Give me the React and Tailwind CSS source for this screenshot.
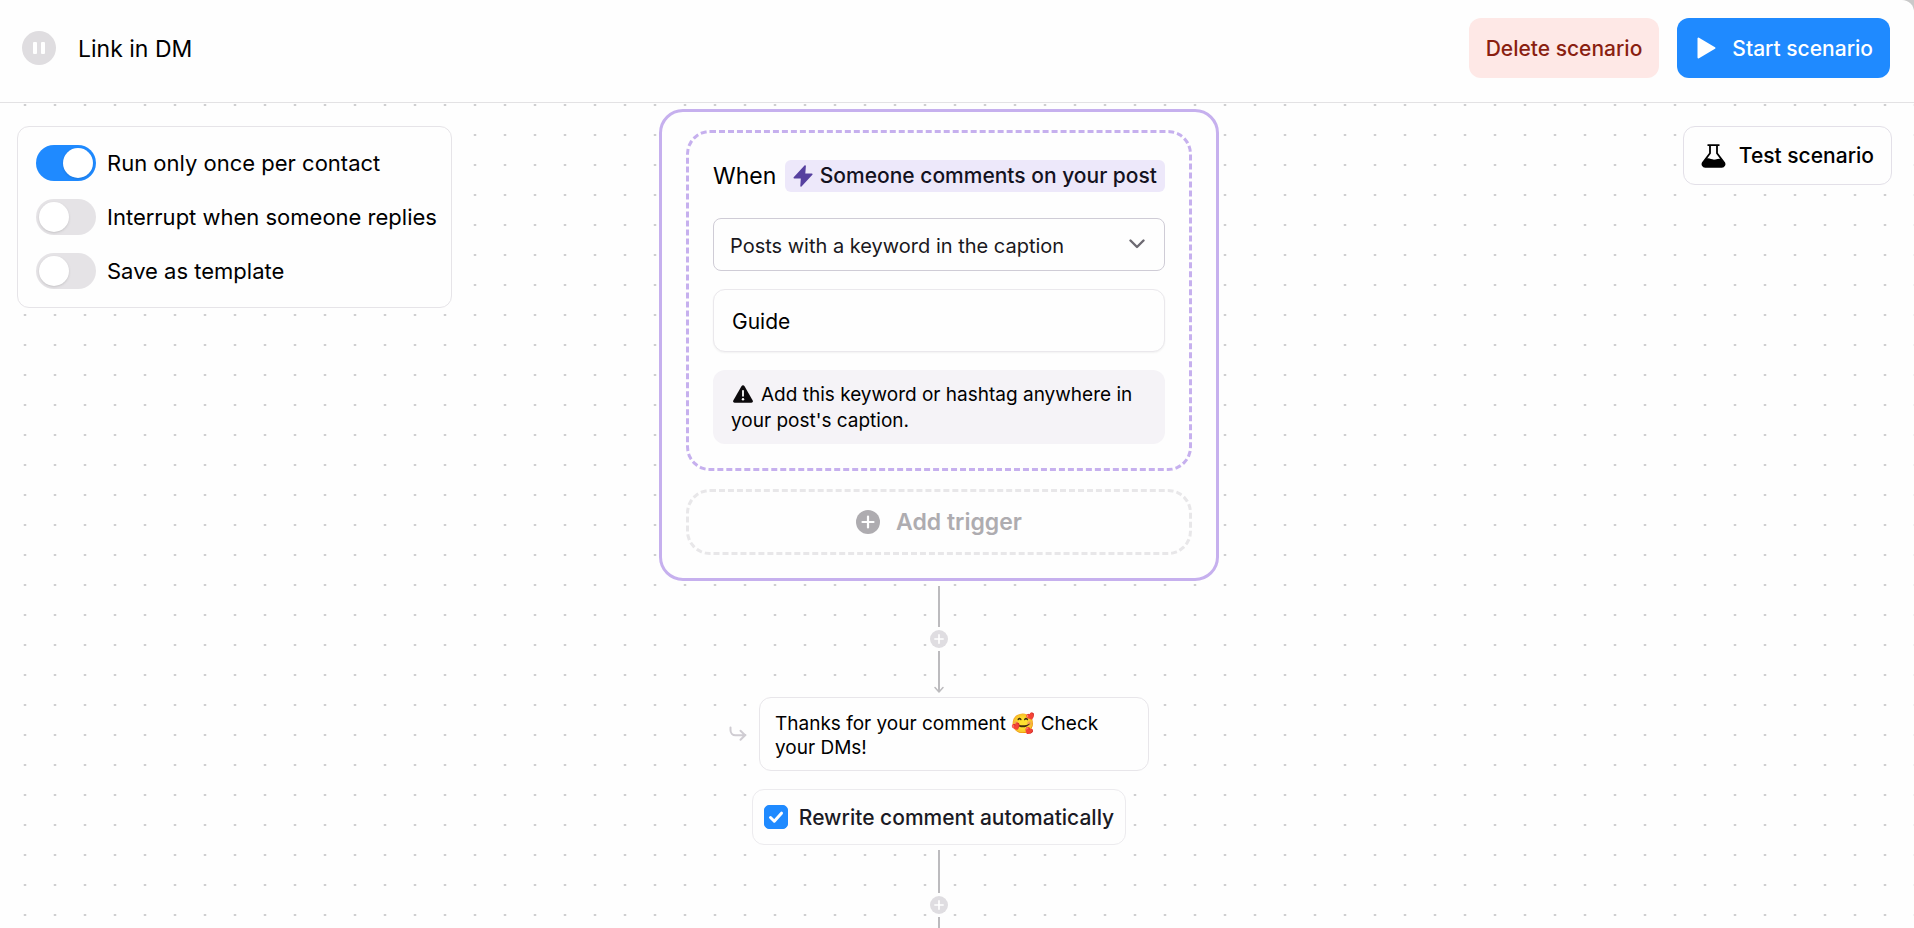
import { useState } from "react";

const TOGGLES = [
  { id: "once", label: "Run only once per contact", on: true },
  { id: "interrupt", label: "Interrupt when someone replies", on: false },
  { id: "template", label: "Save as template", on: false },
];

function PlusCircle({ className }) {
  return (
    <svg viewBox="0 0 24 24" className={className} aria-hidden="true">
      <circle cx="12" cy="12" r="12" fill="currentColor" />
      <path d="M12 6.5v11M6.5 12h11" stroke="#fff" strokeWidth="2.2" strokeLinecap="round" />
    </svg>
  );
}

function ScenarioHeader() {
  return (
    <header className="flex items-center justify-between rounded-tr-xl border-b border-[#e3e2e4] bg-[#fefefe] pt-[18px] pr-6 pb-6 pl-[22px]">
      <div className="flex items-center gap-[22px]">
        <svg viewBox="0 0 34 34" className="size-[34px]" aria-hidden="true">
          <circle cx="17" cy="17" r="17" fill="#dfdde0" />
          <rect x="11" y="11" width="4" height="12" rx="1" fill="#fff" />
          <rect x="19" y="11" width="4" height="12" rx="1" fill="#fff" />
        </svg>
        <h1 className="pt-0.5 text-[23px]">Link in DM</h1>
      </div>
      <div className="flex gap-[18px]">
        <button type="button" className="h-[60px] cursor-pointer rounded-xl bg-[#fee8e6] px-[17px] pt-0.5 text-[21px] font-medium text-[#8a1f11]">
          Delete scenario
        </button>
        <button type="button" className="flex h-[60px] cursor-pointer items-center gap-4 rounded-xl bg-[#1f8aff] pr-[17px] pl-5 text-[21px] font-medium text-white">
          <svg viewBox="0 0 19 22" className="h-[22px] w-[19px]" aria-hidden="true">
            <path d="M1.500 1.500v19l16-9.500z" fill="currentColor" stroke="currentColor" strokeWidth="2" strokeLinejoin="round" />
          </svg>
          <span className="pt-0.5">Start scenario</span>
        </button>
      </div>
    </header>
  );
}

function SettingsPanel() {
  const [values, setValues] = useState(TOGGLES);

  const toggle = (id) =>
    setValues(values.map((v) => (v.id === id ? { ...v, on: !v.on } : v)));

  return (
    <div className="flex flex-col gap-[18px] rounded-xl border border-[#e6e4e8] bg-[#fefefe] py-[18px] pr-[14px] pl-[18px]">
      {values.map((v) => (
        <label key={v.id} className="flex cursor-pointer items-center gap-[11px] text-[22px] leading-9 whitespace-nowrap">
          <input
            type="checkbox"
            role="switch"
            checked={v.on}
            onChange={() => toggle(v.id)}
            className="h-9 w-[60px] cursor-pointer appearance-none rounded-full bg-[#e5e3e6] p-[3px] before:block before:size-[30px] before:rounded-full before:bg-white before:shadow-sm checked:bg-[#1f8aff] checked:before:ml-6"
          />
          {v.label}
        </label>
      ))}
    </div>
  );
}

function TriggerCard() {
  const [keyword, setKeyword] = useState("Guide");

  return (
    <section className="flex w-[560px] flex-col gap-[18px] rounded-[24px] border-3 border-[#c6b0ee] bg-[#fefefe] px-6 pt-[18px] pb-[23px]">
      <div className="flex flex-col gap-[18px] rounded-[24px] border-3 border-dashed border-[#c6b0ee] px-6 pt-[27px] pb-6">
        <div className="mb-2 flex items-center justify-between whitespace-nowrap">
          <span className="text-[23px] leading-8">When</span>
          <span className="flex h-8 items-center gap-[7px] rounded-md bg-[#ede8fa] px-2 text-[21px] font-medium text-[#14121f]">
            <svg viewBox="0 0 20 22" className="h-[22px] w-5" aria-hidden="true">
              <path d="M11.500.500.700 12.200c-.5.500-.1 1.200.5 1.200h6.600L7.300 21c0 .8.700 1 1.200.5L19.400 9.800c.5-.6.100-1.300-.6-1.300h-6.500l.6-7.400c0-.9-.8-1.200-1.400-.600z" fill="#56409f" />
            </svg>
            Someone comments on your post
          </span>
        </div>
        <div className="relative">
          <select
            aria-label="Posts to watch"
            className="h-[53px] w-full cursor-pointer appearance-none rounded-lg border border-[#cfccd6] bg-[#fefefe] px-4 pt-0.5 text-xl text-[#1a1820] outline-none"
          >
            <option>Posts with a keyword in the caption</option>
            <option>Any post</option>
          </select>
          <svg viewBox="0 0 16 10" className="pointer-events-none absolute top-[21px] right-5 h-[10px] w-4" aria-hidden="true">
            <path d="M1.500 1.500 8 8l6.500-6.500" fill="none" stroke="#6d6a72" strokeWidth="2.400" strokeLinecap="round" strokeLinejoin="round" />
          </svg>
        </div>
        <input
          type="text"
          aria-label="Keyword"
          value={keyword}
          onChange={(e) => setKeyword(e.target.value)}
          className="h-[63px] w-full rounded-xl border border-[#eae8ec] bg-[#fefefe] px-[18px] pt-0.5 text-[21px] shadow-xs outline-none"
        />
        <p className="rounded-xl bg-[#f5f3f7] px-[18px] pt-3 pb-[10px] text-[19px] leading-[26px]">
          <svg viewBox="0 0 20 18" className="mr-2 ml-0.5 inline-block h-[18px] w-5 align-[-2px]" aria-hidden="true">
            <path d="M8.600.900c.6-1 2.200-1 2.800 0l8.300 14.600c.6 1.100-.1 2.300-1.300 2.300H1.600c-1.200 0-1.900-1.200-1.300-2.300z" fill="#0c0a0d" />
            <path d="M10 5.800v5" stroke="#fff" strokeWidth="1.800" strokeLinecap="round" />
            <circle cx="10" cy="14.200" r="1.200" fill="#fff" />
          </svg>
          Add this keyword or hashtag anywhere in your post's caption.
        </p>
      </div>
      <button
        type="button"
        className="flex h-[66px] cursor-pointer items-center justify-center gap-4 rounded-[24px] border-3 border-dashed border-[#e8e7e9] text-[23px] font-semibold text-[#aeacb0]"
      >
        <PlusCircle className="size-6" />
        Add trigger
      </button>
    </section>
  );
}

function AddStep() {
  return (
    <button type="button" aria-label="Add step" className="my-[3px] cursor-pointer text-[#dfdde1]">
      <PlusCircle className="size-[18px]" />
    </button>
  );
}

function ReplyStep() {
  const [rewrite, setRewrite] = useState(true);

  return (
    <>
      <div className="mt-1 flex w-[420px] items-center gap-3">
        <svg viewBox="0 0 18 16" className="h-4 w-[18px] shrink-0" aria-hidden="true">
          <path d="M1.500 1.500v2.500c0 3 2 5.300 5 5.300H16M11.500 4.800l4.600 4.500-4.600 4.500" fill="none" stroke="#cfccd2" strokeWidth="2" strokeLinecap="round" strokeLinejoin="round" />
        </svg>
        <p className="flex-1 rounded-xl border border-[#e8e6ea] bg-[#fefefe] px-[15px] pt-[14px] pb-[10px] text-[19px] leading-6">
          Thanks for your comment 🥰 Check your DMs!
        </p>
      </div>
      <label className="mt-[18px] flex h-14 cursor-pointer items-center gap-[11px] rounded-xl border border-[#ecebee] bg-[#fefefe] px-[11px] text-[21px] font-medium whitespace-nowrap text-[#1b1a24]">
        <span className="relative size-6">
          <input
            type="checkbox"
            checked={rewrite}
            onChange={(e) => setRewrite(e.target.checked)}
            className="block size-6 cursor-pointer appearance-none rounded-[5px] border border-[#cfccd6] checked:border-[#1f8aff] checked:bg-[#1f8aff]"
          />
          {rewrite && (
            <svg viewBox="0 0 24 24" className="pointer-events-none absolute inset-0" aria-hidden="true">
              <path d="m6.500 12.500 3.800 3.700 7.200-8" fill="none" stroke="#fff" strokeWidth="3" strokeLinecap="round" strokeLinejoin="round" />
            </svg>
          )}
        </span>
        <span className="pt-0.5">Rewrite comment automatically</span>
      </label>
    </>
  );
}

export default function App() {
  return (
    <div className="flex min-h-screen flex-col bg-[#c9c9c9] font-[Inter,sans-serif] text-black">
      <ScenarioHeader />
      <main className="grid flex-1 grid-cols-[1fr_auto_1fr] bg-[#fefefe] bg-[radial-gradient(ellipse_2px_1px_at_25px_2px,#bcbcbe_40%,transparent)] bg-size-[30px_30px] pt-[6px] pr-[22px] pl-[17px]">
        <div className="flex items-start pt-[17px]">
          <SettingsPanel />
        </div>

        {/* scenario flow */}
        <div className="mr-[31px] flex flex-col items-center">
          <TriggerCard />
          <div className="mt-[5px] h-[41px] w-0.5 bg-[#bcbbbe]" />
          <AddStep />
          <svg viewBox="0 0 10 42" className="h-[42px] w-[10px]" fill="none" stroke="#bcbbbe" aria-hidden="true">
            <path d="M5 0v41" strokeWidth="2" />
            <path d="m1 36.500 4 4.500 4-4.500" strokeWidth="1.500" strokeLinecap="round" strokeLinejoin="round" />
          </svg>
          <ReplyStep />
          <div className="mt-[5px] h-[43px] w-0.5 bg-[#bcbbbe]" />
          <AddStep />
          <div className="min-h-[8px] w-0.5 flex-1 bg-[#bcbbbe]" />
        </div>

        <div className="flex items-start justify-end pt-[17px]">
          <button type="button" className="flex h-[59px] cursor-pointer items-center gap-[13px] rounded-xl border border-[#e3e0e8] bg-[#fefefe] px-[17px] text-[21px] font-medium whitespace-nowrap">
            <svg viewBox="0 0 25 24" className="h-6 w-[25px]" aria-hidden="true">
              <path d="M6.500 1.200h12M9 1.200v8L2 18.500c-1.300 2 0 4.300 2.200 4.300h16.600c2.200 0 3.500-2.300 2.200-4.300L16 9.200v-8" fill="none" stroke="currentColor" strokeWidth="1.800" strokeLinejoin="round" />
              <path d="M5 14.800c3.500-1.500 5.500 1.500 9.500.7 2-.4 3.500-1 5.500-.5l3.500 4.500c.8 1.800-.5 3.300-2.700 3.300H4.200C2 22.800.700 20.500 2 18.500z" fill="currentColor" />
            </svg>
            Test scenario
          </button>
        </div>
      </main>
    </div>
  );
}
